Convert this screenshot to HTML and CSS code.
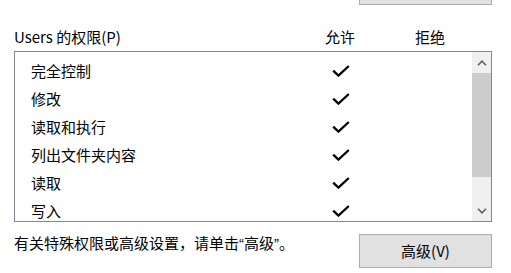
FILE: index.html
```html
<!DOCTYPE html>
<html lang="zh-CN">
<head>
<meta charset="utf-8">
<title>权限</title>
<link rel="stylesheet" href="styles.css">
</head>
<body>
<div class="page">
  <div class="top-btn"></div>
  <div class="header">
    <div class="h-name">Users 的权限(P)</div>
    <div class="h-col">允许</div>
    <div class="h-col">拒绝</div>
  </div>
  <div class="list">
    <div class="rows">
      <div class="row"><div class="name">完全控制</div><div class="col"><svg class="check" viewBox="0 0 18 12" width="18" height="12"><path d="M1.2 5.6 L6.4 10.6 L16.8 1"/></svg></div><div class="col"></div></div>
      <div class="row"><div class="name">修改</div><div class="col"><svg class="check" viewBox="0 0 18 12" width="18" height="12"><path d="M1.2 5.6 L6.4 10.6 L16.8 1"/></svg></div><div class="col"></div></div>
      <div class="row"><div class="name">读取和执行</div><div class="col"><svg class="check" viewBox="0 0 18 12" width="18" height="12"><path d="M1.2 5.6 L6.4 10.6 L16.8 1"/></svg></div><div class="col"></div></div>
      <div class="row"><div class="name">列出文件夹内容</div><div class="col"><svg class="check" viewBox="0 0 18 12" width="18" height="12"><path d="M1.2 5.6 L6.4 10.6 L16.8 1"/></svg></div><div class="col"></div></div>
      <div class="row"><div class="name">读取</div><div class="col"><svg class="check" viewBox="0 0 18 12" width="18" height="12"><path d="M1.2 5.6 L6.4 10.6 L16.8 1"/></svg></div><div class="col"></div></div>
      <div class="row"><div class="name">写入</div><div class="col"><svg class="check" viewBox="0 0 18 12" width="18" height="12"><path d="M1.2 5.6 L6.4 10.6 L16.8 1"/></svg></div><div class="col"></div></div>
    </div>
    <div class="scrollbar">
      <div class="arrow"><svg viewBox="0 0 10 6" width="10" height="6"><path d="M1 5.2 L5 1.2 L9 5.2"/></svg></div>
      <div class="thumb"></div>
      <div class="track"></div>
      <div class="arrow"><svg viewBox="0 0 10 6" width="10" height="6"><path d="M1 0.8 L5 4.8 L9 0.8"/></svg></div>
    </div>
  </div>
  <div class="footer">
    <div class="hint">有关特殊权限或高级设置，请单击<span class="q">“</span>高级<span class="q">”</span>。</div>
    <div class="btn">高级(V)</div>
  </div>
</div>
</body>
</html>
```
FILE: styles.css
```css
html, body {
  margin: 0;
  padding: 0;
  background: #ffffff;
}
body {
  font-family: "Noto Sans CJK SC", "Noto Sans", sans-serif;
  font-size: 15px;
  color: #000000;
}
.page {
  width: 511px;
  height: 273px;
  overflow: hidden;
}
.top-btn {
  margin-left: 359px;
  width: 131px;
  height: 4px;
  background: #e1e1e1;
  border: 1px solid #adadad;
  border-top: none;
}
.header {
  display: flex;
  margin-top: 22px;
  margin-bottom: 4px;
  padding-left: 14px;
  height: 20px;
  line-height: 20px;
}
.h-name {
  width: 296px;
}
.h-col {
  width: 60px;
  text-align: center;
  margin-right: 30px;
}
.h-col:last-child {
  margin-right: 0;
}
.list {
  margin-left: 14px;
  width: 478px;
  height: 171px;
  box-sizing: border-box;
  border: 1px solid #828790;
  display: flex;
  overflow: hidden;
}
.rows {
  flex: 1;
  padding-top: 5px;
  padding-left: 16px;
  overflow: hidden;
}
.row {
  display: flex;
  height: 28px;
  line-height: 28px;
  align-items: center;
}
.name {
  width: 279px;
}
.col {
  width: 60px;
  margin-right: 30px;
  display: flex;
  justify-content: center;
  align-items: center;
}
.col:last-child {
  margin-right: 0;
}
.check {
  display: block;
  margin-left: 1px;
}
.check path {
  fill: none;
  stroke: #000000;
  stroke-width: 2.3;
}
.scrollbar {
  width: 19px;
  background: #f0f0f0;
  display: flex;
  flex-direction: column;
}
.arrow {
  height: 21px;
  display: flex;
  align-items: center;
  justify-content: center;
}
.arrow path {
  fill: none;
  stroke: #606060;
  stroke-width: 1.6;
}
.thumb {
  height: 104px;
  background: #cdcdcd;
}
.track {
  flex: 1;
}
.footer {
  display: flex;
  padding-left: 14px;
}
.hint {
  width: 345px;
  margin-top: 11px;
  line-height: 20px;
  height: 20px;
}
.q {
  font-family: "Liberation Sans", sans-serif;
}
.btn {
  margin-top: 12px;
  width: 131px;
  height: 32px;
  background: #e1e1e1;
  border: 1px solid #adadad;
  text-align: center;
  line-height: 32px;
}
```
